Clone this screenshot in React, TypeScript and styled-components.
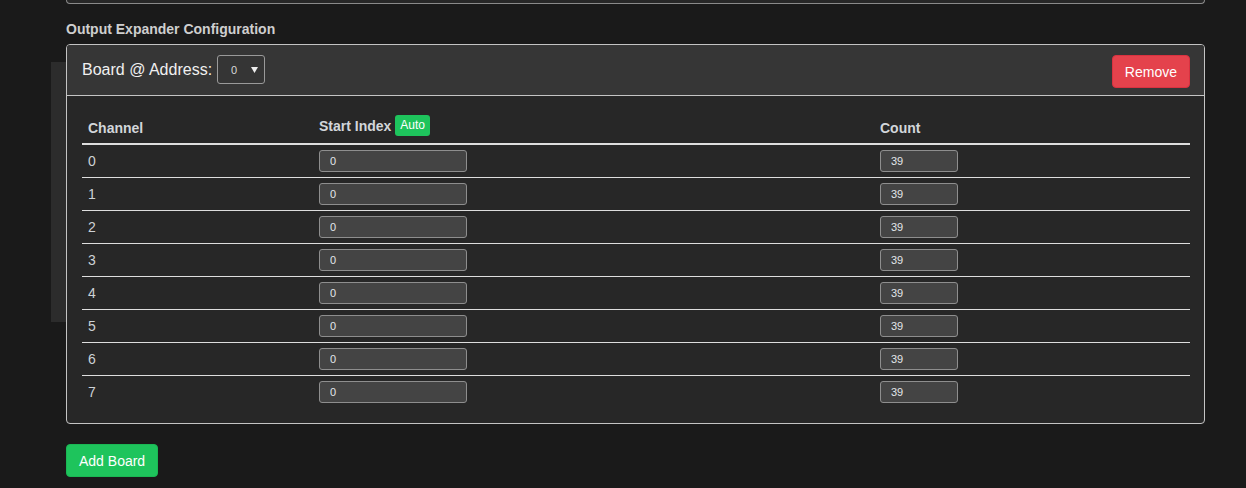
import React, { FC, useState } from 'react';
import styled, { createGlobalStyle } from 'styled-components';

const GlobalStyle = createGlobalStyle`
	html, body {
		margin: 0;
		padding: 0;
		background: #1a1a1a;
		font-family: "Liberation Sans", Arial, sans-serif;
		color: #ddd;
	}
`

const CHANNELS = [0, 1, 2, 3, 4, 5, 6, 7];

const App: FC = () => {
	const [address, setAddress] = useState('0');

	return (
		<>
			<GlobalStyle />
			<Page>
				<SidePanel />
				<Content>
					<PrevCard />
					<SectionTitle>Output Expander Configuration</SectionTitle>

					<BoardCard>
						<BoardHeader>
							<AddressLabel>
								Board @ Address:
								<SelectBox value={address} onChange={e => setAddress(e.target.value)}>
									<option value="0">0</option>
									<option value="1">1</option>
									<option value="2">2</option>
									<option value="3">3</option>
								</SelectBox>
							</AddressLabel>
							<Button variant="danger">Remove</Button>
						</BoardHeader>

						<BoardBody>
							<ChannelTable>
								<colgroup>
									<col style={{ width: 231 }} />
									<col style={{ width: 561 }} />
									<col />
								</colgroup>
								<thead>
									<tr>
										<th>Channel</th>
										<th>
											Start Index<AutoBadge>Auto</AutoBadge>
										</th>
										<th>Count</th>
									</tr>
								</thead>
								<tbody>
									{CHANNELS.map(ch => (
										<tr key={ch}>
											<td>{ch}</td>
											<td><NumInput width={148} defaultValue="0" /></td>
											<td><NumInput width={78} defaultValue="39" /></td>
										</tr>
									))}
								</tbody>
							</ChannelTable>
						</BoardBody>
					</BoardCard>

					<Button variant="success">Add Board</Button>
				</Content>
			</Page>
		</>
	)
}

export default App;


const Page = styled.div`
	position: relative;
	width: 1246px;
	height: 488px;
	overflow: hidden;
`

// lighter panel peeking out from behind the card on the left
const SidePanel = styled.div`
	position: absolute;
	left: 51px;
	top: 62px;
	width: 60px;
	height: 260px;
	background: #2c2c2c;
`

const Content = styled.div`
	position: relative;
	width: 1139px;
	margin-left: 66px;
	display: flex;
	flex-direction: column;
	align-items: flex-start;
`

const PrevCard = styled.div`
	align-self: stretch;
	height: 3px;
	border: 1px solid #8a8a8a;
	border-top: none;
	border-radius: 0 0 4px 4px;
	background: #272727;
`

const SectionTitle = styled.div`
	margin-top: 17px;
	margin-bottom: 6px;
	font-size: 14px;
	line-height: 17px;
	font-weight: 700;
	color: #cfcfcf;
`

const BoardCard = styled.div`
	align-self: stretch;
	border: 1px solid #c4c4c4;
	border-radius: 4px;
	background: #272727;
	overflow: hidden;
	margin-bottom: 20px;
`

const BoardHeader = styled.div`
	display: flex;
	justify-content: space-between;
	align-items: flex-start;
	padding: 10px 14px 7px 15px;
	background: #363636;
	border-bottom: 1px solid #c4c4c4;
`

const AddressLabel = styled.label`
	display: flex;
	align-items: center;
	gap: 5px;
	height: 29px;
	font-size: 16px;
	color: #f0f0f0;
`

const SelectBox = styled.select`
	width: 48px;
	height: 29px;
	padding: 0 4px 0 13px;
	color: #d8d8d8;
	border: 1px solid #9a9a9a;
	border-radius: 3px;
	font-family: "Liberation Sans", Arial, sans-serif;
	font-size: 11px;
	appearance: none;
	background: #353535 url("data:image/svg+xml;utf8,<svg xmlns='http://www.w3.org/2000/svg' width='7' height='6'><path d='M0 0 L7 0 L3.5 6 Z' fill='%23eeeeee'/></svg>") no-repeat right 6px center;
`

const Button = styled.button<{ variant: 'danger' | 'success' }>`
	height: 33px;
	padding: 0 12px;
	font-family: "Liberation Sans", Arial, sans-serif;
	font-size: 14px;
	color: #fff;
	border-radius: 4px;
	cursor: pointer;
	background: ${p => p.variant === 'danger' ? '#e4424c' : '#1ec45c'};
	border: 1px solid ${p => p.variant === 'danger' ? '#d93240' : '#1ab854'};
`

const BoardBody = styled.div`
	padding: 16px 14px 15px 15px;
`

const ChannelTable = styled.table`
	width: 100%;
	border-collapse: collapse;
	table-layout: fixed;
	font-size: 14px;

	& th {
		height: 31px;
		padding: 0 6px;
		text-align: left;
		font-weight: 700;
		color: #d2d6da;
		border-bottom: 2px solid #dedede;
		vertical-align: middle;
	}

	& td {
		height: 32px;
		padding: 0 6px;
		color: #cdd2d6;
		vertical-align: middle;
		border-bottom: 1px solid #dedede;
	}

	& tbody tr:last-child td {
		border-bottom: none;
	}
`

const AutoBadge = styled.span`
	display: inline-block;
	margin-left: 4px;
	padding: 0 5px;
	height: 21px;
	line-height: 21px;
	vertical-align: middle;
	background: #1ec45c;
	color: #fff;
	font-size: 12px;
	font-weight: 400;
	border-radius: 3px;
	position: relative;
	top: -2px;
`

const NumInput = styled.input<{ width: number }>`
	box-sizing: border-box;
	display: block;
	width: ${p => p.width}px;
	height: 22px;
	padding: 0 10px;
	background: #444;
	border: 1px solid #8e8e8e;
	border-radius: 3px;
	color: #e2e6ea;
	font-family: "Liberation Sans", Arial, sans-serif;
	font-size: 11px;
	outline: none;
`
